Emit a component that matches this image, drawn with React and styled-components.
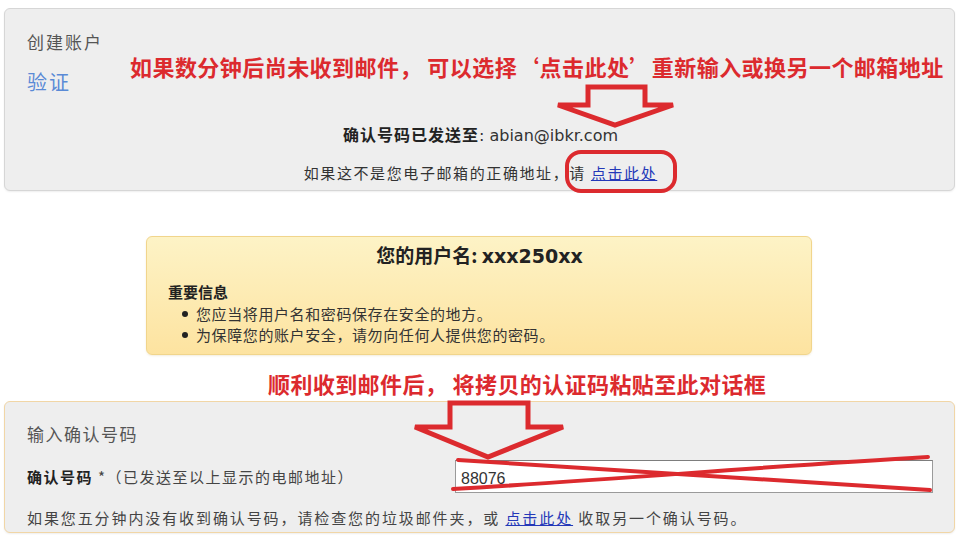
import React from "react";
import styled, { createGlobalStyle } from "styled-components";

const RED = "#dc2a2e";

const GlobalStyle = createGlobalStyle`
  html, body {
    margin: 0;
    padding: 0;
    background: #ffffff;
  }
  body {
    font-family: "Noto Sans CJK SC", "DejaVu Sans", sans-serif;
    color: #333;
  }
`;

const Page = styled.div`
  width: 960px;
  height: 538px;
  box-sizing: border-box;
  padding: 8px 5px 0 4px;
  overflow: hidden;
  display: flex;
  flex-direction: column;
`;

const Panel = styled.section`
  position: relative;
  box-sizing: border-box;
  height: ${(p) => p.$height}px;
  background: #eeeeee;
  border: 1px solid ${(p) => p.$border || "#d6d6d6"};
  border-radius: 6px;
  box-shadow: 0 1px 2px rgba(0, 0, 0, 0.07);
  padding: ${(p) => p.$padding};
`;

const StepLabel = styled.div`
  font-size: 17px;
  line-height: 24px;
  letter-spacing: 2px;
  color: #555;
`;

const StepTitle = styled.div`
  margin-top: 14px;
  font-size: 20px;
  line-height: 28px;
  letter-spacing: 2px;
  color: #5a8ad6;
`;

const Centered = styled.div`
  text-align: center;
  font-size: ${(p) => p.$size || 15}px;
  line-height: 24px;
  margin-top: ${(p) => p.$top}px;
  letter-spacing: ${(p) => p.$spacing || 0}px;
  color: #333;
`;

const Strong = styled.b`
  font-weight: 700;
  color: #222;
`;

const Email = styled.span`
  font-family: "DejaVu Sans", sans-serif;
  letter-spacing: 0;
`;

const Link = styled.a`
  color: #2438b8;
  text-decoration: underline;
  cursor: pointer;
`;

const Callout = styled.div`
  font-family: "Noto Sans CJK SC", sans-serif;
  font-weight: 700;
  font-size: 22px;
  line-height: 30px;
  letter-spacing: ${(p) => p.$spacing}px;
  color: ${RED};
  white-space: nowrap;
`;

const FloatingCallout = styled(Callout)`
  position: absolute;
  left: 125px;
  top: 42px;
`;

const InlineCallout = styled(Callout)`
  margin: 13px 0 3px 264px;
`;

const ArrowSvg = styled.svg`
  position: absolute;
  left: ${(p) => p.$left}px;
  top: ${(p) => p.$top}px;
  overflow: visible;
  pointer-events: none;
`;

const Ring = styled.div`
  position: absolute;
  left: 560px;
  top: 141px;
  width: 112px;
  height: 43px;
  box-sizing: border-box;
  border: 4px solid ${RED};
  border-radius: 16px;
  pointer-events: none;
`;

const NoticeBox = styled.section`
  align-self: center;
  box-sizing: border-box;
  width: 666px;
  height: 119px;
  margin-top: 45px;
  margin-left: -1px;
  padding: 5px 20px 0 21px;
  border: 1px solid #f1d58c;
  border-radius: 6px;
  background: linear-gradient(#fdf3c6, #fde3a0);
  box-shadow: 0 1px 2px rgba(180, 140, 40, 0.15);
`;

const NoticeTitle = styled.h2`
  margin: 0;
  text-align: center;
  font-size: 19px;
  line-height: 26px;
  font-weight: 700;
  color: #222;
`;

const Username = styled.span`
  font-family: "DejaVu Sans", sans-serif;
`;

const NoticeHeading = styled.div`
  margin-top: 12px;
  font-size: 15px;
  line-height: 22px;
  font-weight: 700;
  color: #222;
`;

const BulletList = styled.ul`
  margin: 0;
  padding: 0 0 0 28px;
  list-style: none;
`;

const Bullet = styled.li`
  position: relative;
  font-size: 15px;
  line-height: 21px;
  letter-spacing: 0.6px;
  color: #333;

  &::before {
    content: "";
    position: absolute;
    left: -14px;
    top: 8px;
    width: 6px;
    height: 6px;
    border-radius: 50%;
    background: #222;
  }
`;

const FormTitle = styled.div`
  font-size: 17px;
  line-height: 24px;
  letter-spacing: 1.5px;
  color: #555;
`;

const FieldRow = styled.div`
  display: flex;
  align-items: center;
  margin-top: 14px;
  height: 33px;
`;

const FieldLabel = styled.label`
  width: 428px;
  flex: none;
  font-size: 15px;
  letter-spacing: 1.5px;
  color: #444;
`;

const InputWrap = styled.div`
  position: relative;
  width: 478px;
  height: 33px;
`;

const CodeInput = styled.input`
  box-sizing: border-box;
  width: 100%;
  height: 100%;
  border: 1px solid #9a9a9a;
  border-top-color: #7d7d7d;
  background: #fff;
  padding: 4px 5px 0;
  font-family: "Liberation Sans", Arial, sans-serif;
  font-size: 16px;
  color: #333;
  outline: none;
`;

const CrossSvg = styled.svg`
  position: absolute;
  left: -5px;
  top: -6px;
  pointer-events: none;
`;

const HelpText = styled.div`
  margin-top: 14px;
  font-size: 15px;
  line-height: 22px;
  letter-spacing: 1.9px;
  color: #444;
  white-space: nowrap;
`;

const DownArrow = ({ left, top, width, height, d }) => (
  <ArrowSvg $left={left} $top={top} width={width} height={height} viewBox={`0 0 ${width} ${height}`}>
    <path d={d} fill="none" stroke={RED} strokeWidth="5" strokeLinejoin="miter" />
  </ArrowSvg>
);

export default function App() {
  return (
    <>
      <GlobalStyle />
      <Page>
        <Panel $height={183} $padding="21px 20px 0 22px">
          <StepLabel>创建账户</StepLabel>
          <StepTitle>验证</StepTitle>
          <Centered $top={26} $size={16} $spacing={1}>
            <Strong>确认号码已发送至</Strong>
            <Email>: abian@ibkr.com</Email>
          </Centered>
          <Centered $top={13} $size={15} $spacing={1.6}>
            如果这不是您电子邮箱的正确地址，请 <Link>点击此处</Link>
          </Centered>

          <FloatingCallout $spacing={0.45}>
            如果数分钟后尚未收到邮件， 可以选择‘点击此处’重新输入或换另一个邮箱地址
          </FloatingCallout>
          <DownArrow
            left={550}
            top={75}
            width={122}
            height={45}
            d="M33 3 H90 V21 H118 L60 41 L3 21 H33 Z"
          />
          <Ring />
        </Panel>

        <NoticeBox>
          <NoticeTitle>
            您的用户名: <Username>xxx250xx</Username>
          </NoticeTitle>
          <NoticeHeading>重要信息</NoticeHeading>
          <BulletList>
            <Bullet>您应当将用户名和密码保存在安全的地方。</Bullet>
            <Bullet>为保障您的账户安全，请勿向任何人提供您的密码。</Bullet>
          </BulletList>
        </NoticeBox>

        <InlineCallout $spacing={0.4}>顺利收到邮件后， 将拷贝的认证码粘贴至此对话框</InlineCallout>

        <Panel $height={132} $border="#f1d6a6" $padding="20px 20px 0 22px">
          <FormTitle>输入确认号码</FormTitle>
          <FieldRow>
            <FieldLabel>
              <Strong>确认号码</Strong> *（已发送至以上显示的电邮地址）
            </FieldLabel>
            <InputWrap>
              <CodeInput defaultValue="88076" />
              <CrossSvg width="485" height="40" viewBox="0 0 485 40">
                <path d="M8 6 C 150 14, 300 26, 480 36" fill="none" stroke={RED} strokeWidth="4" strokeLinecap="round" />
                <path d="M3 35 C 160 26, 320 12, 478 3" fill="none" stroke={RED} strokeWidth="4" strokeLinecap="round" />
              </CrossSvg>
            </InputWrap>
          </FieldRow>
          <HelpText>
            如果您五分钟内没有收到确认号码，请检查您的垃圾邮件夹，或 <Link>点击此处</Link> 收取另一个确认号码。
          </HelpText>
          <DownArrow
            left={407}
            top={-2}
            width={155}
            height={60}
            d="M38 3 H116 V27 H151 L76 57 L3 27 H38 Z"
          />
        </Panel>
      </Page>
    </>
  );
}
